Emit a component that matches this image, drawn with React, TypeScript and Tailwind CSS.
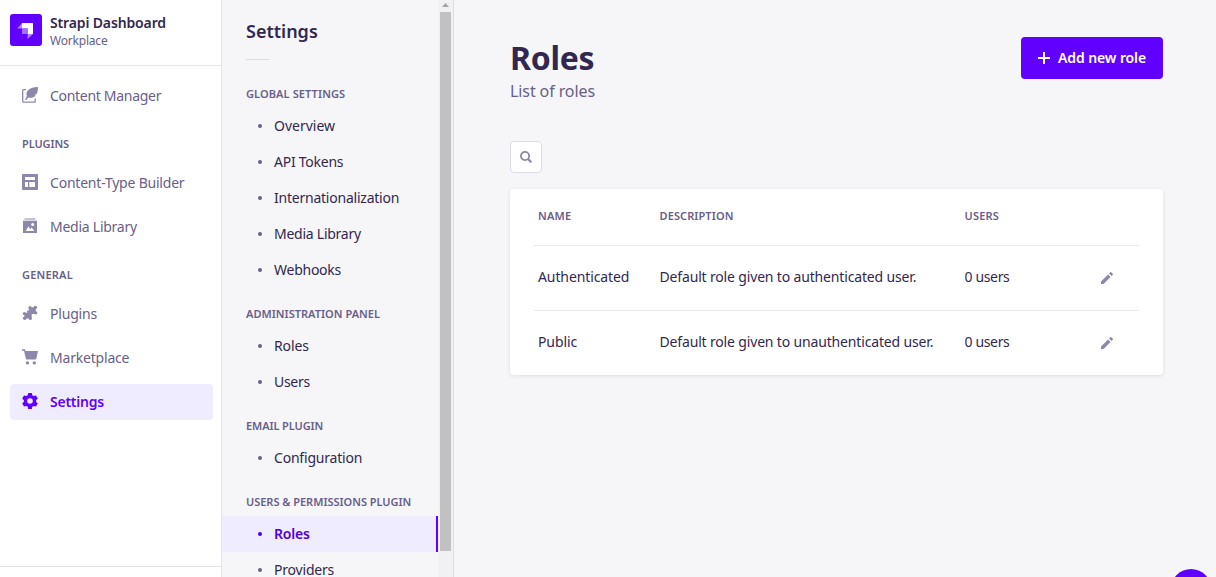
import type { ReactNode } from "react";

const Feather = () => (
  <svg width="16" height="16" viewBox="0 0 16 16" fill="none">
    <path d="M4 2.600H1.600Q.7 2.600.7 3.500V14.300Q.7 15.200 1.600 15.200H12.300Q13.200 15.200 13.200 14.300V11.600" stroke="#8f87ab" strokeWidth="1.300" />
    <path d="M16 0C11.200 0 7.200 1.200 5.300 3.900 4.200 5.500 4.300 7.200 4.800 9.100L3 12.900h1.400l1.500-2.200c3.800.5 6.400-.3 8-2.500h-1.500l2.500-1.600C15.700 4.700 15.900 2.500 16 0Z" fill="#8f87ab" />
  </svg>
);

const Layout = () => (
  <svg width="16" height="16" viewBox="0 0 16 16">
    <path fill="#8f87ab" fillRule="evenodd" d="M1 0h14a1 1 0 0 1 1 1v14a1 1 0 0 1-1 1H1a1 1 0 0 1-1-1V1a1 1 0 0 1 1-1Zm2 3v3h10V3H3Zm0 5v5h3V8H3Zm4.300 0v5H13V8H7.300Z" />
  </svg>
);

const Landscape = () => (
  <svg width="16" height="16" viewBox="0 0 16 16">
    <path fill="#8f87ab" opacity=".5" d="M2.500 0h11v2h-11z" />
    <path fill="#8f87ab" d="M1 2.700h14V15H1z" />
    <path fill="#fff" d="M3.700 12.900h8.800L9.600 9.400l-1.400 1.700-1.800-2.700Z" />
    <circle cx="10.700" cy="6.500" r="1.500" fill="#fff" />
  </svg>
);

const Puzzle = () => (
  <svg width="16" height="16" viewBox="0 0 16 16" fill="#8f87ab">
    <path d="M6.800 2.300h7v6.600H9.700v4.500H2.300V7.800h4.500Z" />
    <circle cx="8" cy="2.500" r="1.600" />
    <circle cx="13.300" cy="2.500" r="1.800" />
    <circle cx="13.800" cy="7.800" r="1.600" />
    <circle cx="2.300" cy="8.500" r="1.600" />
    <circle cx="2.700" cy="13.200" r="1.800" />
    <circle cx="8.300" cy="13.500" r="1.600" />
    <circle cx="6.200" cy="6.800" r="1.300" />
  </svg>
);

const Cog = () => (
  <svg width="16" height="16" viewBox="0 0 16 16" fill="#6200ff">
    <path fillRule="evenodd" d="M6.200 0h3.600l.5 2.300 1.400.8 2.300-.7 1.800 3.100L14.100 7.200v1.600l1.700 1.700-1.800 3.100-2.300-.7-1.400.8-.5 2.300H6.200l-.5-2.300-1.400-.8-2.300.7-1.800-3.100 1.700-1.700V7.200L.2 5.500 2 2.400l2.300.7 1.400-.8L6.200 0ZM8 5.200a2.800 2.800 0 1 0 0 5.600 2.800 2.800 0 0 0 0-5.600Z" />
  </svg>
);

const Cart = () => (
  <svg width="16" height="16" viewBox="0 0 16 16" fill="#8f87ab">
    <path d="M0 .3h2.700l.8 1.800H16l-1.700 7.600a1 1 0 0 1-1 .8H4.900a1 1 0 0 1-1-.8L2 1.700H0Z" />
    <circle cx="5.500" cy="13.900" r="1.700" />
    <circle cx="12.300" cy="13.900" r="1.700" />
  </svg>
);

const Pencil = () => (
  <svg width="12" height="12" viewBox="0 0 24 24" fill="#8f87ab">
    <path d="M23.604 3.514c.528.528.528 1.360 0 1.887l-2.622 2.607-4.990-4.990L18.600.396a1.322 1.322 0 011.887 0l3.118 3.118zM0 24v-4.990l14.200-14.200 4.990 4.990L4.990 24H0z" />
  </svg>
);

const Logo = () => (
  <svg width="32" height="32" viewBox="0 0 32 32" className="shrink-0">
    <rect width="32" height="32" rx="3" fill="#6200ff" />
    <path d="M12 9h10.500a.5.5 0 0 1 .5.500V20h-5.400v-5.500H12Z" fill="#fff" />
    <path d="M12 9v5.500H7.200ZM17.600 20H23l-5.400 4.900Z" fill="#b185ff" />
    <path d="M12 14.500h5.600V20H12.500a.5.5 0 0 1-.5-.5Z" fill="#a370ff" />
  </svg>
);

function NavItem({ icon, label, tracking, active }: { icon: ReactNode; label: string; tracking: string; active?: boolean }) {
  return (
    <a className={`flex h-9 items-center gap-3 rounded pl-3 text-[14px] ${active ? "bg-[#f0ecff] font-semibold text-[#6200ff]" : "text-[#68608a]"}`}>
      <span className="-mt-0.5">{icon}</span>
      <span className={`-mt-0.5 ${tracking}`}>{label}</span>
    </a>
  );
}

function NavLabel({ children, tracking }: { children: ReactNode; tracking: string }) {
  return <h3 className={`mt-1 flex h-[35px] items-end pb-px pl-3 text-[11px] leading-4 font-semibold text-[#68608a] ${tracking}`}>{children}</h3>;
}

const groups = [
  {
    title: "GLOBAL SETTINGS",
    tracking: "tracking-[0.1px]",
    items: [
      ["Overview", ""],
      ["API Tokens", "tracking-[-0.25px]"],
      ["Internationalization", "tracking-[-0.23px]"],
      ["Media Library", "tracking-[-0.25px]"],
      ["Webhooks", "tracking-[-0.25px]"],
    ],
  },
  {
    title: "ADMINISTRATION PANEL",
    tracking: "tracking-[0.02px]",
    items: [
      ["Roles", "tracking-[-0.1px]"],
      ["Users", "tracking-[-0.3px]"],
    ],
  },
  { title: "EMAIL PLUGIN", tracking: "tracking-[-0.1px]", items: [["Configuration", "tracking-[-0.2px]"]] },
  {
    title: "USERS & PERMISSIONS PLUGIN",
    tracking: "tracking-[-0.02px]",
    items: [
      ["Roles", "tracking-[-0.2px]"],
      ["Providers", "tracking-[-0.2px]"],
    ],
  },
];

const rows = [
  { name: "Authenticated", description: "Default role given to authenticated user." },
  { name: "Public", description: "Default role given to unauthenticated user." },
];

export default function App() {
  return (
    <div className="relative flex h-[577px] w-[1216px] overflow-hidden bg-[#f6f6f9] font-['Noto_Sans',sans-serif] text-[14px] text-[#32284f]">
      <nav className="flex w-[222px] shrink-0 flex-col border-r border-[#e3e3ec] bg-white">
        <header className="flex h-[66px] shrink-0 gap-2 border-b border-[#e5e5ec] pt-3.5 pl-2.5">
          <Logo />
          <div>
            <div className="text-[14px] leading-[18px] font-semibold tracking-[-0.14px]">Strapi Dashboard</div>
            <div className="text-[12px] leading-[18px] tracking-[-0.2px] text-[#68608a]">Workplace</div>
          </div>
        </header>
        <div className="flex flex-1 flex-col pt-3 pr-2 pl-2.5">
          <NavItem icon={<Feather />} label="Content Manager" tracking="tracking-[-0.3px]" />
          <NavLabel tracking="tracking-[-0.1px]">PLUGINS</NavLabel>
          <div className="mt-3 flex flex-col gap-2">
            <NavItem icon={<Layout />} label="Content-Type Builder" tracking="tracking-[-0.21px]" />
            <NavItem icon={<Landscape />} label="Media Library" tracking="tracking-[-0.25px]" />
          </div>
          <NavLabel tracking="tracking-[0.2px]">GENERAL</NavLabel>
          <div className="mt-3 flex flex-col gap-2">
            <NavItem icon={<Puzzle />} label="Plugins" tracking="tracking-[-0.2px]" />
            <NavItem icon={<Cart />} label="Marketplace" tracking="tracking-[-0.2px]" />
            <NavItem icon={<Cog />} label="Settings" tracking="tracking-[-0.25px]" active />
          </div>
        </div>
        <div className="h-[11px] shrink-0 border-t border-[#e3e3ec]" />
      </nav>

      <aside className="flex w-[232px] shrink-0 border-r border-[#dcdce4]">
        <div className="w-[216px] shrink-0">
          <h2 className="pt-5 pl-6 text-[18px] leading-[23px] font-semibold">Settings</h2>
          <div className="mt-4 ml-6 h-px w-6 bg-[#dcdce4]" />
          <div className="pt-2">
            {groups.map((g) => (
              <section key={g.title}>
                <h3 className="flex h-10 items-end pb-1.5 pl-6 text-[11px] leading-4 font-semibold whitespace-nowrap text-[#68608a]">
                  <span className={g.tracking}>{g.title}</span>
                </h3>
                {g.items.map(([item, tracking]) => {
                  const active = g.title.startsWith("USERS") && item === "Roles";
                  return (
                    <a key={item} className={`flex h-9 items-center gap-3 pl-9 ${active ? "border-r-2 border-[#6200ff] bg-[#f0ecff] font-semibold text-[#5000db]" : ""}`}>
                      <span className={`size-1 rounded-full ${active ? "bg-[#5000db]" : "bg-[#68608a]"}`} />
                      <span className={`leading-5 ${tracking}`}>{item}</span>
                    </a>
                  );
                })}
              </section>
            ))}
          </div>
        </div>
        <div className="flex flex-1 flex-col items-center bg-[#f1f1f3] pt-[3px]">
          <svg width="7" height="4" viewBox="0 0 7 4" fill="#a3a3a3"><path d="M3.500 0 7 4H0Z" /></svg>
          <div className="mt-[5px] h-[539px] w-[11px] bg-[#c1c1c1]" />
        </div>
      </aside>

      <main className="flex-1 pt-[37px] pr-[53px] pl-14">
        <div className="flex items-start justify-between">
          <div>
            <h1 className="text-[32px] leading-[42px] font-bold tracking-[-0.3px]">Roles</h1>
            <p className="text-[16px] leading-6 tracking-[-0.1px] text-[#68608a]">List of roles</p>
          </div>
          <button className="flex h-[42px] w-[142px] items-center gap-2 rounded bg-[#6200ff] pl-[17px] font-semibold whitespace-nowrap text-white">
            <svg width="12" height="12" viewBox="0 0 12 12" fill="#fff"><path d="M5 0h2v5h5v2H7v5H5V7H0V5h5Z" /></svg>
            <span className="-mt-0.5 tracking-[-0.1px]">Add new role</span>
          </button>
        </div>
        <button className="mt-[38px] flex size-8 items-center justify-center rounded border border-[#dcdce4] bg-white">
          <svg width="12" height="12" viewBox="0 0 12 12" fill="none" stroke="#8f87ab" strokeWidth="1.800"><circle cx="5" cy="5" r="4.100" /><path d="m8 8 3.300 3.300" strokeWidth="2.200" /></svg>
        </button>
        <div className="mt-4 h-[186px] rounded bg-white px-6 shadow-[0_1px_4px_rgba(33,33,52,0.1)]">
          <div className="grid h-[57px] grid-cols-[121.5px_305px_136px_1fr] items-center border-b border-[#eaeaef] pl-1 text-[11px] font-semibold text-[#68608a]">
            <span className="-mt-px tracking-[0.2px]">NAME</span>
            <span className="-mt-px tracking-[0.1px]">DESCRIPTION</span>
            <span className="-mt-px tracking-[0.2px]">USERS</span>
          </div>
          {rows.map((r) => (
            <div key={r.name} className="grid h-[65px] grid-cols-[121.5px_305px_136px_1fr] items-center border-b border-[#eaeaef] pl-1 last:border-transparent">
              <span className="-mt-[3px] tracking-[-0.1px]">{r.name}</span>
              <span className="-mt-[3px] tracking-[-0.16px]">{r.description}</span>
              <span className="-mt-[3px] tracking-[-0.35px]">0 users</span>
              <span><Pencil /></span>
            </div>
          ))}
        </div>
      </main>
      <div className="absolute top-[569px] left-[1171px] size-10 rounded-full bg-[#6200ff]" />
    </div>
  );
}
